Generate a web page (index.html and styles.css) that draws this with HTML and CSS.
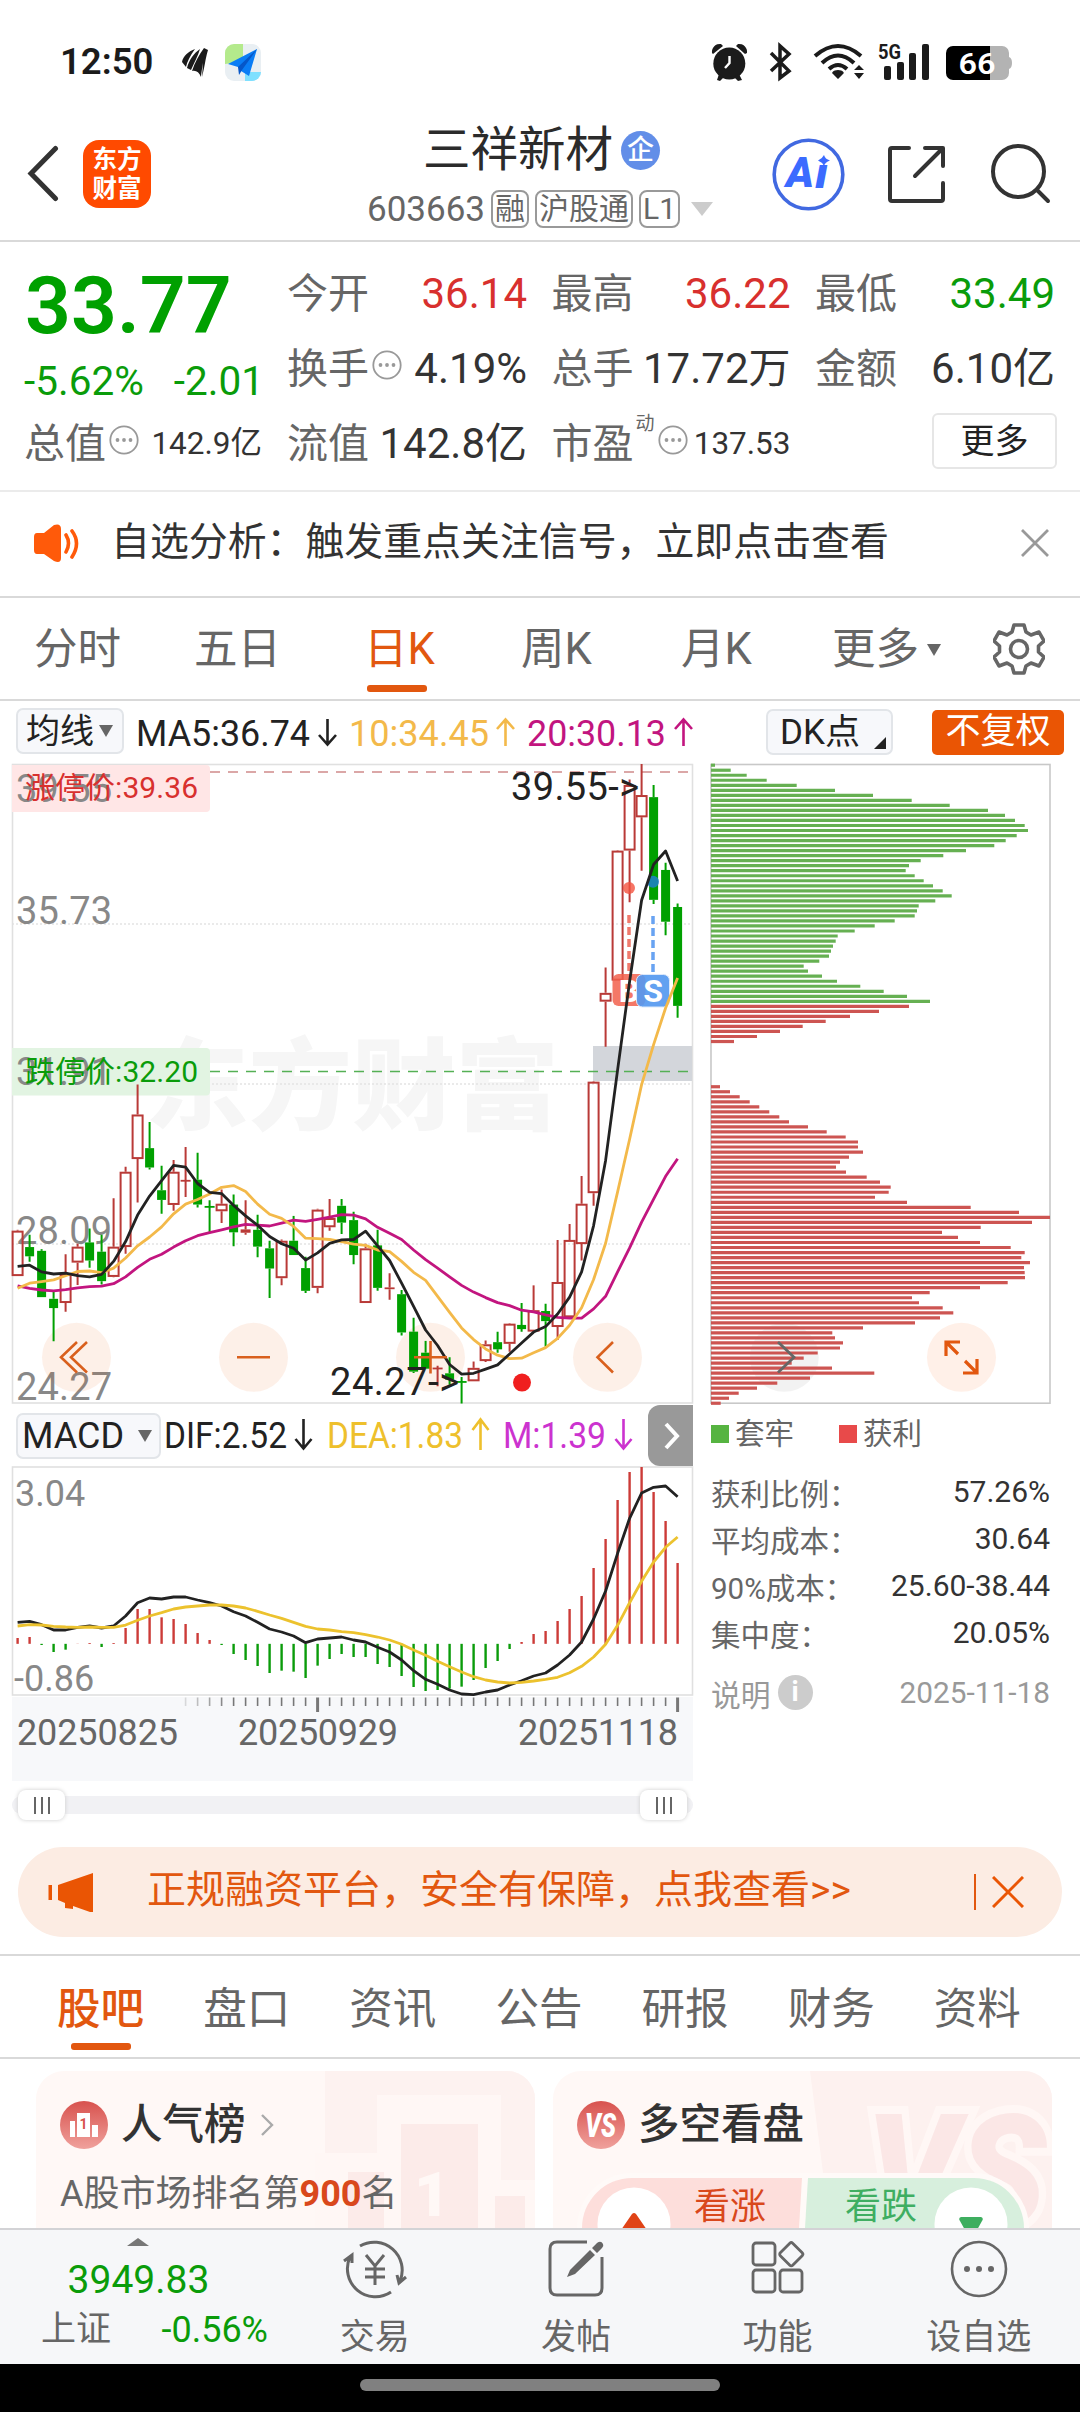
FILE: index.html
```html
<!DOCTYPE html>
<html lang="zh-CN">
<head>
<meta charset="utf-8">
<title>三祥新材 603663</title>
<link rel="stylesheet" href="styles.css">
</head>
<body>
<div class="screen">

<div class="status">
  <span class="clock">12:50</span>
  <svg class="status-left" viewBox="180 40 86 44">
    <path d="M182 62C183 56 189 51 195 49C190 56 187 62 186 67Z M187 68C189 60 194 53 200 49C198 56 194 63 191 70Z M192 71C195 62 199 55 204 48C205 56 202 66 201 77C199 72 196 70 192 71Z M204 48L208 50C205 60 205 66 202 77Z" fill="#1b1b1b"/>
    <rect x="225" y="44" width="36" height="37" rx="9" fill="#e9eff3"/>
    <path d="M234 44H243V62L225 64V53A9 9 0 0 1 234 44Z" fill="#b4ea8c"/>
    <path d="M245 72H261A9 9 0 0 1 252 81H245Z" fill="#7fe0ff"/>
    <path d="M257 49L228 64L238 67L241 71L249 76Z" fill="#0a7df5"/>
    <path d="M257 49L238 67L239 75L242 70Z" fill="#0556c8"/>
  </svg>
  <svg class="status-right" viewBox="706 38 312 48">
    <g fill="#1b1b1b">
      <circle cx="729.300" cy="63.500" r="16"/>
      <path d="M712 53A8 8 0 0 1 721 44L723 46L713 54Z M747 53A8 8 0 0 0 738 44L736 46L745 54Z"/>
      <path d="M719 74L724 77L720 81L717 80Z M739 74L734 77L738 81L742 80Z"/>
      <path d="M838 70C833 70 831 73 833 74L838 79L843 74C845 73 843 70 838 70Z"/>
      <path d="M859 65L864 70H854Z M859 79L854 73H864Z"/>
      <rect x="884" y="66" width="7" height="14" rx="2"/><rect x="897" y="62" width="7" height="18" rx="2"/>
      <rect x="909" y="53" width="7" height="27" rx="2"/><rect x="922" y="44" width="7" height="36" rx="2"/>
    </g>
    <path d="M729.500 56V63L725 68" fill="none" stroke="#fff" stroke-width="2.400"/>
    <g fill="none" stroke="#1b1b1b" stroke-width="4">
      <path d="M771 53L789 71L780 78V46L789 54L771 71" stroke-width="3.500"/>
      <path d="M815 56Q838 36 861 56M822 63Q838 48 854 63M829 69Q838 61 847 69"/>
    </g>
    <text x="878" y="58.500" class="net" textLength="23" lengthAdjust="spacingAndGlyphs">5G</text>
    <path d="M953 46H990V80H953A7 7 0 0 1 946 73V53A7 7 0 0 1 953 46Z" fill="#000"/>
    <path d="M990 46H1002A7 7 0 0 1 1009 53V57Q1012 58 1012 63T1009 69V73A7 7 0 0 1 1002 80H990Z" fill="#b3b3b3"/>
    <text x="958.500" y="74" class="battery" textLength="37" lengthAdjust="spacingAndGlyphs">66</text>
  </svg>
</div>

<header class="header">
  <svg class="back" viewBox="26 146 34 58"><path d="M55.500 149.500L31 174.500L55.500 199.500" fill="none" stroke="#333" stroke-width="5" stroke-linecap="round"/></svg>
  <div class="logo"><span>东方</span><span>财富</span></div>
  <div class="stock">
    <div class="name">三祥新材<span class="badge">企</span></div>
    <div class="code"><span>603663</span><i>融</i><i>沪股通</i><i>L1</i><b class="down"></b></div>
  </div>
  <svg class="actions" viewBox="770 134 284 80">
    <circle cx="808.500" cy="174.500" r="34.300" fill="none" stroke="#4169e1" stroke-width="3.600"/>
    <g class="ai"><text x="786" y="187" textLength="28" lengthAdjust="spacingAndGlyphs">A</text><text x="815" y="188" textLength="13" lengthAdjust="spacingAndGlyphs">ı</text><path d="M824 155Q825 159 830 160.500Q825 162 824 166Q822 162 818 160.500Q822 159 824 155Z"/></g>
    <g fill="none" stroke="#333" stroke-width="4" stroke-linecap="round" stroke-linejoin="round">
      <path d="M909 148H892Q890 148 890 150V199Q890 201 892 201H941Q943 201 943 199V183M925 148H943V166M942 149L915 176"/>
      <circle cx="1018.500" cy="171.500" r="25.500"/><path d="M1037 190L1048 201"/>
    </g>
  </svg>
</header>

<section class="quote">
  <div class="last">
    <div class="price">33.77</div>
    <div class="change"><span>-5.62%</span><span>-2.01</span></div>
    <div class="cell"><label>总值<svg class="more-dot" viewBox="0 0 30 30"><use href="#dots"/></svg></label><span class="sm">142.9亿</span></div>
  </div>
  <div class="stats">
    <div class="cell"><label>今开</label><span class="up">36.14</span></div>
    <div class="cell"><label>最高</label><span class="up">36.22</span></div>
    <div class="cell"><label>最低</label><span class="dn">33.49</span></div>
    <div class="cell"><label>换手<svg class="more-dot" viewBox="0 0 30 30"><use href="#dots"/></svg></label><span>4.19%</span></div>
    <div class="cell"><label>总手</label><span>17.72万</span></div>
    <div class="cell"><label>金额</label><span>6.10亿</span></div>
    <div class="cell"><label>流值</label><span>142.8亿</span></div>
    <div class="cell"><label>市盈<sup>动</sup><svg class="more-dot" viewBox="0 0 30 30"><use href="#dots"/></svg></label><span class="sm">137.53</span></div>
    <div class="cell end"><button class="more">更多</button></div>
  </div>
</section>

<section class="notice">
  <svg class="speaker" viewBox="32 524 48 40">
    <path d="M36 534H43L53 526Q60 524 60 530V559Q60 565 53 562L43 555H36Q33 555 33 551V538Q33 534 36 534Z" fill="#ff5a0a"/>
    <path d="M65 536Q70 544 65 553M71 532Q80 544 71 558" fill="none" stroke="#ff5a0a" stroke-width="3.600" stroke-linecap="round"/>
  </svg>
  <span class="notice-text">自选分析：触发重点关注信号，立即点击查看</span>
  <svg class="close" viewBox="0 0 30 30"><path d="M2 2L28 28M28 2L2 28" stroke="#999" stroke-width="2.800"/></svg>
</section>

<nav class="periods">
  <span>分时</span><span>五日</span><span class="on">日K</span><span>周K</span><span>月K</span><span>更多<b class="caret"></b></span>
  <svg class="gear" viewBox="-26 -26 52 52"><path d="M-5 -24H5L7 -17L12 -14L20 -17L25 -8L19.500 -3V3L25 8L20 17L12 14L7 17L5 24H-5L-7 17L-12 14L-20 17L-25 8L-19.500 3V-3L-25 -8L-20 -17L-12 -14L-7 -17Z" fill="none" stroke="#666" stroke-width="3.600" stroke-linejoin="round"/><circle r="8.500" fill="none" stroke="#666" stroke-width="3.600"/></svg>
</nav>

<div class="ma-bar">
  <span class="chip ma-chip">均线<b class="caret"></b></span>
  <svg class="ma-legend" viewBox="136 708 562 48">
    <text x="136" y="745.500" fill="#222" textLength="174" lengthAdjust="spacingAndGlyphs">MA5:36.74</text>
    <text x="349" y="745.500" fill="#f3b94a" textLength="140" lengthAdjust="spacingAndGlyphs">10:34.45</text>
    <text x="527" y="745.500" fill="#c2157f" textLength="139" lengthAdjust="spacingAndGlyphs">20:30.13</text>
    <g fill="none" stroke-width="2.600"><path stroke="#222" d="M327.500 719V744M319 735L327.500 744.500L336 735"/><path stroke="#f3b94a" d="M505.500 746V720M497 729L505.500 719.500L514 729"/><path stroke="#c2157f" d="M683.500 746V720M675 729L683.500 719.500L692 729"/></g>
  </svg>
  <span class="chip dk">DK点</span>
  <span class="adjust">不复权</span>
</div>

<main class="charts">
  <div class="left">
    <svg class="kline" viewBox="10 760 686 645">
      <text class="wm" x="145" y="1122" textLength="414" lengthAdjust="spacingAndGlyphs">东方财富</text>
      <g stroke="#e3e3e3" stroke-width="1.500" stroke-dasharray="2 2"><path d="M12 924H692M12 1084H692M12 1244H692"/></g>
      <rect x="12.500" y="764.500" width="680" height="638.500" fill="none" stroke="#e0e0e0" stroke-width="1.600"/>
      <rect x="593" y="1046" width="99" height="35" fill="#d3d6db"/>
      <path d="M210 772H692" stroke="#d08a8a" stroke-width="1.600" stroke-dasharray="10 8"/>
      <path d="M210 1071.500H692" stroke="#55b055" stroke-width="1.600" stroke-dasharray="10 8"/>
      <path d="M12 765H206Q210 765 210 769V808Q210 812 206 812H12Z" fill="#ffe6e6"/>
      <path d="M12 1048H206Q210 1048 210 1052V1091.500Q210 1095.500 206 1095.500H12Z" fill="#e2f4e2"/>
      <g class="axis"><text x="16" y="802" textLength="96">39.55</text><text x="16" y="924" textLength="96">35.73</text><text x="16" y="1084.500" textLength="96">31.91</text><text x="16" y="1244" textLength="96">28.09</text><text x="16" y="1400" textLength="96">24.27</text></g>
      <g class="limit"><text x="25" y="797.700" fill="#d8302e" textLength="173">涨停价:39.36</text><text x="25" y="1081.600" fill="#0a9c0a" textLength="173">跌停价:32.20</text></g>
      <g fill="#ea5504" fill-opacity=".09"><circle cx="76.500" cy="1357.300" r="34.500"/><circle cx="253.500" cy="1357.300" r="34.500"/><circle cx="430.500" cy="1357.300" r="34.500"/><circle cx="607.500" cy="1357.300" r="34.500"/></g>
      <g id="candles"></g>
      <g class="marks"><text x="511" y="799.700" textLength="128">39.55-&gt;</text><text x="330" y="1394.800" textLength="129">24.27-&gt;</text></g>
      <circle cx="629" cy="888" r="6" fill="#f4533f" fill-opacity=".8"/>
      <circle cx="653" cy="881.700" r="6" fill="#1f7fd0" fill-opacity=".85"/>
      <path d="M629 915V974" stroke="#ef7a6c" stroke-width="3.500" stroke-dasharray="8 4"/>
      <path d="M653 916V974" stroke="#68a3f2" stroke-width="3.500" stroke-dasharray="8 4"/>
      <rect x="612.500" y="974" width="33" height="32" rx="6" fill="#f2604c" fill-opacity=".85"/>
      <text class="bs" x="629" y="1002">B</text>
      <rect x="636.500" y="974.500" width="33" height="32.500" rx="6" fill="#5599f0" fill-opacity=".92" stroke="#dce9fb"/>
      <text class="bs" x="653" y="1002">S</text>
      <g id="averages" fill="none" stroke-width="2.800" stroke-linejoin="round"></g>
      <circle cx="522" cy="1382.600" r="9" fill="#f01f1f"/>
      <g fill="none" stroke="#d9601d" stroke-width="2.600"><path d="M77 1342L61 1357.300L77 1372.500M87 1342L71 1357.300L87 1372.500M237 1357.300H270M414 1357.300H447M430.500 1341V1373.500M613 1342L597.500 1357.300L613 1372.500"/></g>
    </svg>
    <div class="macd-bar">
      <span class="chip macd-chip">MACD<b class="caret"></b></span>
      <svg class="macd-legend" viewBox="164 1405 472 61">
        <text x="164" y="1448" fill="#222" textLength="123" lengthAdjust="spacingAndGlyphs">DIF:2.52</text>
        <text x="327" y="1448" fill="#eec02c" textLength="136" lengthAdjust="spacingAndGlyphs">DEA:1.83</text>
        <text x="503" y="1448" fill="#cc33cf" textLength="103" lengthAdjust="spacingAndGlyphs">M:1.39</text>
        <g fill="none" stroke-width="2.600"><path stroke="#222" d="M303.500 1419V1448M295.500 1439L303.500 1448.500L311.500 1439"/><path stroke="#eec02c" d="M480.500 1450V1420M472.500 1430L480.500 1419.500L488.500 1430"/><path stroke="#cc33cf" d="M623.500 1419V1448M615.500 1439L623.500 1448.500L631.500 1439"/></g>
      </svg>
      <span class="next"><svg viewBox="0 0 16 28"><path d="M2 2L13 14L2 26" fill="none" stroke="#fff" stroke-width="4"/></svg></span>
    </div>
    <svg class="macd" viewBox="10 1466 686 231">
      <rect x="12.500" y="1467" width="680" height="228" fill="none" stroke="#e0e0e0" stroke-width="1.600"/>
      <g id="bars"></g>
      <g id="signals" fill="none" stroke-width="2.800" stroke-linejoin="round"></g>
      <g class="axis small"><text x="15" y="1505.700">3.04</text><text x="14" y="1690.700">-0.86</text></g>
    </svg>
    <svg class="dates" viewBox="12 1697 681 84">
      <g id="ticks"></g>
      <g class="date"><text x="17" y="1745" textLength="161">20250825</text><text x="238" y="1745" textLength="160">20250929</text><text x="518" y="1745" textLength="160">20251118</text></g>
    </svg>
    <div class="slider"><span><i></i><i></i><i></i></span><span><i></i><i></i><i></i></span></div>
  </div>

  <div class="right">
    <svg class="chips" viewBox="708 760 346 645">
      <rect x="711" y="764.500" width="339" height="638.700" fill="none" stroke="#c8c8c8" stroke-width="1.600"/>
      <circle cx="784.300" cy="1357.300" r="34.500" fill="#000" fill-opacity=".05"/>
      <g id="distribution"></g>
      <path d="M778 1342L794 1357.300L778 1372.500" fill="none" stroke="#666" stroke-width="2.800"/>
      <circle cx="961.500" cy="1357.300" r="34.500" fill="#fff0e8"/>
      <path d="M946 1356V1342H960M946 1342L958 1354M977 1359V1373H963M977 1373L965 1361" fill="none" stroke="#e2570f" stroke-width="3.200"/>
    </svg>
    <div class="legend"><span><i class="g"></i>套牢</span><span><i class="r"></i>获利</span></div>
    <dl class="cost">
      <div><dt>获利比例：</dt><dd>57.26%</dd></div>
      <div><dt>平均成本：</dt><dd>30.64</dd></div>
      <div><dt>90%成本：</dt><dd>25.60-38.44</dd></div>
      <div><dt>集中度：</dt><dd>20.05%</dd></div>
    </dl>
    <div class="explain"><span>说明<b>i</b></span><span>2025-11-18</span></div>
  </div>
</main>

<aside class="banner">
  <svg class="horn" viewBox="48 1871 46 41"><path d="M93 1872V1911H90L73 1905V1908L65 1907V1902L58 1899V1884ZM48.500 1884H52V1899H48.500Z" fill="#ea5504"/></svg>
  <span class="banner-text">正规融资平台，安全有保障，点我查看&gt;&gt;</span>
  <i class="rule"></i>
  <svg class="banner-close" viewBox="0 0 32 32"><path d="M1 1L31 31M31 1L1 31" stroke="#ea5504" stroke-width="3"/></svg>
</aside>

<nav class="sections">
  <span class="on">股吧</span><span>盘口</span><span>资讯</span><span>公告</span><span>研报</span><span>财务</span><span>资料</span>
</nav>

<section class="cards">
  <article class="card">
    <svg class="card-bg" viewBox="36 2071 499 157">
      <path d="M325 2071H535V2228H325Z" fill="#fdf2f0"/>
      <path d="M315 2228V2153H377V2095H501V2180H535V2228Z" fill="#fff7f5"/>
      <path d="M348 2228V2172H384V2228ZM401 2228V2124H478V2228ZM495 2228V2196H525V2228Z" fill="#fcebe9"/>
      <text x="414" y="2216" class="podium">1</text>
    </svg>
    <div class="card-head">
      <svg class="disc" viewBox="-24 -24 48 48"><defs><linearGradient id="rd" x2="0" y2="1"><stop stop-color="#d8524e"/><stop offset="1" stop-color="#f0a19c"/></linearGradient></defs><circle r="24" fill="url(#rd)"/><path d="M-7 -12H6V12H-7ZM-14 -4H-9V12H-14ZM8 0H14V12H8Z" fill="#fff"/><text x="-4.500" y="4" class="one">1</text></svg>
      <h3>人气榜</h3>
      <svg class="chev" viewBox="0 0 14 24"><path d="M2 2L12 12L2 22" fill="none" stroke="#aaa" stroke-width="2.400"/></svg>
    </div>
    <p class="rank">A股市场排名第<b>900</b>名</p>
  </article>
  <article class="card">
    <svg class="card-bg" viewBox="553 2071 499 157">
      <path d="M810 2071H1052V2228H830Z" fill="#fdf1ef"/>
      <text x="866" y="2226" class="vs-wm" textLength="180" lengthAdjust="spacingAndGlyphs">VS</text>
    </svg>
    <div class="card-head">
      <svg class="disc" viewBox="-24 -24 48 48"><circle r="24" fill="url(#rd)"/><text x="-16" y="12" class="vs" textLength="31" lengthAdjust="spacingAndGlyphs">VS</text></svg>
      <h3>多空看盘</h3>
    </div>
    <svg class="vote" viewBox="577 2172 452 56">
      <path d="M577 2228A55 55 0 0 1 632 2173H974A55 55 0 0 1 1029 2228Z" fill="#fffaf8"/>
      <path d="M582 2228A50 50 0 0 1 632 2178H802L799 2228Z" fill="#fddedb"/>
      <path d="M808 2178H974A50 50 0 0 1 1024 2228H805Z" fill="#d7efdd"/>
      <circle cx="634" cy="2224" r="36.500" fill="#fff"/><circle cx="971" cy="2224" r="36.500" fill="#fff"/>
      <path d="M632 2214Q634 2212 636 2214L647 2230H621Z" fill="#e04316"/>
      <path d="M961 2217H981Q984 2218 982 2221L977 2230H965L960 2221Q958 2218 961 2217Z" fill="#3eae5f"/>
      <text x="694" y="2218.500" fill="#d9481c">看涨</text><text x="845" y="2218.500" fill="#3fae62">看跌</text>
    </svg>
  </article>
</section>

<footer class="bottom">
  <div class="index">
    <b class="up-caret"></b>
    <div class="idx-val">3949.83</div>
    <div class="idx-row"><span>上证</span><em>-0.56%</em></div>
  </div>
  <div class="item"><svg viewBox="-34 -30 68 60"><g fill="none" stroke="#666" stroke-width="3"><path d="M-15 -23A28 28 0 0 1 25 12M16 23A28 28 0 0 1 -25 -12M-31 -8L-23 -14L-23 -6M31 8L24 14L22 6"/><path d="M-9 -14L0 -3L9 -14M0 -3V16M-10 0H10M-10 8H10"/></g></svg>交易</div>
  <div class="item"><svg viewBox="-34 -30 68 60"><path d="M11 -27H-19Q-26 -27 -26 -20V19Q-26 26 -19 26H19Q26 26 26 19V-12" fill="none" stroke="#666" stroke-width="3"/><path d="M-9 8L-6 1L14 -19L19 -14L-1 5ZM16 -21L21 -26Q25 -29 27 -25Q28 -23 26 -21L21 -16Z" fill="#666"/></svg>发帖</div>
  <div class="item"><svg viewBox="-34 -30 68 60"><g fill="none" stroke="#666" stroke-width="2.800"><rect x="-24" y="-26" width="22" height="22" rx="3"/><rect x="-24" y="1" width="22" height="22" rx="3"/><rect x="3" y="1" width="22" height="22" rx="3"/><rect x="5.500" y="-23.500" width="17.500" height="17.500" rx="2" transform="rotate(45 14.250 -14.750)"/></g></svg>功能</div>
  <div class="item"><svg viewBox="-34 -30 68 60"><circle r="27" fill="none" stroke="#666" stroke-width="2.600"/><g fill="#666"><circle cx="-12" r="3"/><circle r="3"/><circle cx="12" r="3"/></g></svg>设自选</div>
</footer>
<div class="home"><i></i></div>
</div>

<svg width="0" height="0" class="defs"><symbol id="dots" viewBox="0 0 30 30"><circle cx="15" cy="15" r="13.700" fill="none" stroke="#999" stroke-width="1.800"/><g fill="#999"><circle cx="8.500" cy="15" r="1.900"/><circle cx="15" cy="15" r="1.900"/><circle cx="21.500" cy="15" r="1.900"/></g></symbol></svg>
<script src="charts.js"></script>
</body>
</html>
```
FILE: styles.css
```css
* { box-sizing: border-box; }
body { margin: 0; font-family: Roboto, "Noto Sans CJK SC", sans-serif; color: #333; background: #fff; }
i, em { font-style: normal; }
svg { display: block; flex: none; }
.defs { position: absolute; }
.screen { width: 1080px; height: 2412px; overflow: hidden; display: flex; flex-direction: column; }
.screen > * { flex: none; }

.status { height: 112px; display: flex; align-items: flex-start; padding: 38px 62px 0 60px; }
.clock { font-size: 36.5px; font-weight: 600; line-height: 48px; width: 120px; color: #1b1b1b; }
.status-left { width: 86px; height: 44px; margin-top: 2px; }
.status-right { width: 312px; height: 48px; margin-left: auto; }
.net { font-size: 20px; font-weight: 700; fill: #1b1b1b; }
.battery { font-size: 30px; font-weight: 600; fill: #fff; }

.header { height: 130px; border-bottom: 2px solid #d9d9d9; display: flex; padding: 8px 26px 0; }
.back { width: 34px; height: 58px; margin-top: 25px; }
.logo { width: 68px; height: 68px; border-radius: 16px; background: #ff4a00; color: #fff; margin: 20px 0 0 23px; display: flex; flex-direction: column; align-items: center; justify-content: center; font-size: 24.5px; line-height: 29px; font-weight: 600; }
.stock { flex: 1; display: flex; flex-direction: column; padding-left: 272px; }
.name { display: flex; align-items: center; font-size: 47.5px; line-height: 60px; height: 60px; color: #2b2b2b; white-space: nowrap; }
.badge { width: 39px; height: 39px; border-radius: 50%; background: #628ee8; color: #fff; font-size: 27px; line-height: 39px; text-align: center; margin-left: 8px; font-weight: 500; }
.code { display: flex; align-items: center; height: 38px; margin: 10px 0 0 -56px; font-size: 35px; color: #666; white-space: nowrap; }
.code span { width: 124px; }
.code i { border: 2px solid #999; border-radius: 8px; height: 38px; line-height: 33px; font-size: 30px; padding: 0 2px; margin-right: 6px; text-align: center; }
.down { border: 11px solid transparent; border-top: 14px solid #ccc; border-bottom: 0; margin-left: 5px; }
.actions { width: 284px; height: 80px; margin-top: 14px; }
.ai { font-size: 42px; font-weight: 900; font-style: italic; fill: #3b6bff; }

.quote { height: 250px; display: flex; gap: 27px; padding: 14px 25px 0 26px; border-bottom: 2px solid #ebebeb; }
.last { width: 236px; }
.price { height: 99px; line-height: 100px; font-size: 80.5px; font-weight: 600; color: #00a000; margin-left: -1px; white-space: nowrap; }
.change { height: 52px; line-height: 52px; font-size: 40.5px; color: #0a9c0a; display: flex; justify-content: space-between; margin: 0 -2px 0 -2px; }
.stats { display: grid; grid-template-columns: 238px 237px 238px; column-gap: 26.5px; grid-auto-rows: 75px; }
.cell { height: 75px; display: flex; justify-content: space-between; align-items: center; font-size: 42px; line-height: 50px; white-space: nowrap; }
.last .cell { height: 73px; }
.cell label { color: #666; font-size: 41px; display: flex; align-items: center; margin-left: -2px; }
.cell .sm { font-size: 31.5px; }
.cell sup { font-size: 19px; line-height: 20px; align-self: flex-start; margin: -5px 0 0 2px; }
.up { color: #d8302e; }
.dn { color: #0a9c0a; }
.more-dot { width: 30px; height: 30px; margin: -8px 0 0 3px; }
.end { justify-content: flex-end; }
.more { font: 34px/50px Roboto, "Noto Sans CJK SC", sans-serif; width: 125px; height: 56px; margin: -6px -2px 0 0; padding: 0; border: 2px solid #e6e6e6; border-radius: 6px; background: #fff; color: #222; }

.notice { height: 106px; display: flex; align-items: center; padding: 0 30px 3px 33px; border-bottom: 2px solid #d9d9d9; }
.speaker { width: 48px; height: 40px; }
.notice-text { font-size: 38.9px; line-height: 50px; margin: -2px 0 0 30px; flex: 1; white-space: nowrap; }
.close { width: 30px; height: 30px; }

.periods { height: 103px; display: flex; border-bottom: 2px solid #d9d9d9; font-size: 43.5px; line-height: 104px; color: #666; white-space: nowrap; padding-left: 34px; }
.periods span { width: 160px; height: 104px; display: flex; align-items: center; }
.periods span:nth-child(3) { width: 167px; padding-left: 10px; }
.periods span:nth-child(6) { width: 157px; margin-left: -9px; }
.periods .on, .sections .on { color: #e2570f; position: relative; }
.periods .on::after { content: ""; position: absolute; left: 13px; bottom: 10px; width: 60px; height: 7px; border-radius: 3px; background: #e2570f; }
.caret { border: 7px solid transparent; border-top: 12px solid #666; border-bottom: 0; margin-left: 8px; }
.gear { width: 52px; height: 52px; margin: 25px 0 0 4px; }

.ma-bar { height: 59px; display: flex; padding: 7px 16px 0; align-items: flex-start; white-space: nowrap; }
.chip { border: 2px solid #e2e5e9; background: #f7f8fb; border-radius: 7px; height: 46px; line-height: 41px; display: flex; align-items: center; color: #222; }
.ma-chip { width: 108px; font-size: 34px; padding-left: 8px; }
.ma-chip .caret { margin-left: 5px; }
.ma-legend { width: 562px; height: 48px; margin-left: 12px; font-size: 36px; }
.dk { width: 127px; margin: 1px 0 0 68px; font-size: 35px; padding-left: 12px; position: relative; }
.dk::after { content: ""; position: absolute; right: 5px; bottom: 4px; border-left: 12px solid transparent; border-bottom: 12px solid #222; }
.adjust { margin: 2px 0 0 39px; width: 132px; height: 45px; line-height: 44px; border-radius: 5px; background: #ea5504; color: #fff; font-size: 35px; text-align: center; }

.charts { height: 1073px; display: flex; padding-left: 10px; }
.left { width: 686px; }
.kline { width: 686px; height: 645px; }
.wm { font-size: 100px; font-weight: 900; fill: #f6f6f6; }
.axis { font-size: 38px; fill: #888; }
.axis.small { font-size: 36px; }
.limit { font-size: 30px; }
.marks { font-size: 38px; fill: #222; }
.bs { font-size: 32px; font-weight: 700; fill: #fff; text-anchor: middle; }
.macd-bar { height: 61px; display: flex; padding-left: 6px; }
.macd-chip { width: 145px; margin-top: 8px; font-size: 36px; padding-left: 4px; justify-content: space-between; padding-right: 7px; }
.macd-legend { width: 472px; height: 61px; margin-left: 3px; font-size: 37.5px; }
.next { width: 45px; height: 61px; margin-left: 12px; background: #999; border-radius: 12px 0 0 12px; display: flex; align-items: center; justify-content: center; padding-left: 3px; }
.next svg { width: 16px; height: 28px; }
.macd { width: 686px; height: 231px; }
.dates { width: 681px; height: 84px; margin-left: 2px; background: #f7f8fa; }
.date { font-size: 36px; fill: #666; }
.slider { width: 681px; height: 18px; margin: 15px 0 0 2px; background: #f1f1f4; border-radius: 9px; display: flex; justify-content: space-between; align-items: center; padding: 0 6px; }
.slider span { width: 47px; height: 30px; border-radius: 8px; background: #fff; box-shadow: 0 0 4px #ccc; display: flex; justify-content: center; align-items: center; gap: 5px; }
.slider i { width: 2px; height: 17px; background: #666; }

.right { width: 346px; margin-left: 12px; color: #666; font-size: 29.5px; }
.chips { width: 346px; height: 645px; }
.legend { display: flex; height: 58px; align-items: center; padding-left: 3px; gap: 45px; line-height: 40px; }
.legend span { display: flex; align-items: center; }
.legend i { width: 18px; height: 18px; margin-right: 6px; }
.legend .g { background: #56b441; }
.legend .r { background: #e84a4a; }
.cost { margin: 5px 4px 0 3px; }
.cost div { height: 47px; display: flex; justify-content: space-between; align-items: center; }
.cost dd { margin: 0; color: #333; font-size: 30px; }
.explain { display: flex; justify-content: space-between; align-items: center; margin: 13px 4px 0 3px; height: 47px; color: #999; font-size: 29.8px; }
.explain span { display: flex; align-items: center; }
.explain b { width: 35px; height: 35px; border-radius: 50%; background: #ccc; color: #fff; margin-left: 7px; text-align: center; font-size: 27px; line-height: 35px; }

.banner { margin: 14px 18px 0; height: 90px; border-radius: 45px; background: #fcece3; display: flex; align-items: center; padding: 0 38px 0 30px; color: #e2570f; }
.horn { width: 46px; height: 41px; }
.banner-text { font-size: 39px; line-height: 50px; margin: -4px 0 0 53px; flex: 1; white-space: nowrap; }
.rule { width: 2px; height: 36px; background: #e2570f; }
.banner-close { width: 32px; height: 32px; margin-left: 16px; }

.sections { margin-top: 17px; height: 105px; border: solid #d9d9d9; border-width: 2px 0; display: flex; padding-left: 57px; font-size: 43.5px; line-height: 108px; color: #666; }
.sections span { width: 146.5px; height: 101px; }
.sections .on { font-weight: 500; }
.sections .on::after { content: ""; position: absolute; left: 14px; bottom: 7px; width: 60px; height: 7px; border-radius: 3px; background: #e2570f; }

.cards { height: 169px; padding: 12px 28px 0 36px; display: flex; gap: 18px; overflow: hidden; }
.card { width: 499px; height: 220px; border-radius: 28px; background: #fff8f6; position: relative; overflow: hidden; padding: 30px 0 0 24px; }
.card > * { position: relative; }
.card .card-bg { position: absolute; left: 0; top: 0; width: 499px; height: 157px; }
.podium { font-size: 62px; font-weight: 900; fill: #fff8f6; }
.vs-wm { font-size: 158px; font-weight: 900; font-style: italic; fill: #fbe7e6; stroke: #fff7f5; stroke-width: 16px; paint-order: stroke; }
.card-head { display: flex; align-items: center; height: 48px; }
.disc { width: 48px; height: 48px; }
.one { font-size: 14px; font-weight: 700; fill: #d8524e; }
.vs { font-size: 33px; font-weight: 900; font-style: italic; fill: #fff; }
.card h3 { margin: 0 0 0 13px; font-size: 41.5px; line-height: 48px; font-weight: 500; color: #333; }
.chev { width: 14px; height: 24px; margin-left: 14px; }
.rank { margin: 22px 0 0; font-size: 36px; line-height: 46px; color: #666; white-space: nowrap; }
.rank b { color: #d9481c; }
.vote { width: 452px; height: 56px; font-size: 36px; margin-top: 23px; }

.bottom { height: 136px; border-top: 2px solid #d3d3d6; background: #f6f7f9; display: flex; color: #666; font-size: 35px; }
.index { width: 274px; padding: 8px 0 0 41px; }
.up-caret { display: block; width: 0; border: 11px solid transparent; border-bottom: 8px solid #777; border-top: 0; margin-left: 86px; }
.idx-val { width: 195px; text-align: center; font-size: 39px; line-height: 46px; color: #0a9c0a; margin-top: 11px; }
.idx-row { display: flex; justify-content: space-between; align-items: center; width: 227px; line-height: 50px; margin-top: 2px; }
.idx-row em { color: #0a9c0a; font-size: 36px; }
.item { width: 201.4px; display: flex; flex-direction: column; align-items: center; line-height: 50px; white-space: nowrap; }
.item svg { width: 68px; height: 60px; margin: 9px 0 14px; }
.home { height: 49px; background: #000; display: flex; justify-content: center; padding-top: 15px; }
.home i { width: 360px; height: 12px; border-radius: 6px; background: #808080; }
```
FILE: charts.js
```js
// Daily candles: direction, high, body top, body bottom, low (plot units below y = 750).
const candles = `r1140,1142,1250,1250 g1152,1181,1203,1216 g1186,1190,1300,1300 g1287,1304,1326,1405 r1198,1245,1314,1335
r1173,1180,1218,1271 g1137,1170,1213,1230 g1152,1192,1262,1270 r1065,1180,1252,1253 r990,1002,1181,1197 r795,866,972,1075
g884,946,992,997 g988,1046,1069,1102 r974,1002,1081,1095 r943,1023,1024,1062 g957,1021,1080,1087 g1070,1085,1086,1145
r1044,1078,1096,1124 g1056,1080,1146,1179 r1070,1139,1147,1152 g1104,1140,1180,1205 g1166,1184,1232,1302 r1163,1166,1255,1272
g1107,1166,1200,1200 g1204,1231,1285,1290 r1090,1092,1278,1291 r1067,1112,1134,1142 g1067,1083,1123,1150 g1097,1117,1200,1222
r1173,1184,1314,1314 g1140,1177,1278,1285 r1243,1277,1281,1306 g1283,1293,1384,1391 g1349,1382,1477,1480 g1404,1432,1470,1470
r1463,1469,1470,1512 g1443,1481,1496,1508 g1490,1501,1502,1553 r1453,1468,1500,1500 r1403,1412,1452,1454 g1382,1407,1424,1432
r1362,1363,1411,1430 g1314,1366,1376,1382 r1272,1331,1382,1382 g1316,1333,1357,1418 r1164,1264,1371,1402 r1126,1164,1348,1350
r1012,1078,1174,1213 r787,788,1053,1083 r517,577,598,705 r238,239,548,548 r70,83,239,362 r33,107,160,287 g83,112,356,366
g268,285,408,440 g365,373,608,636`.split(/\s+/);
const ma5 = [1227,1224,1240,1245,1243,1249,1252,1246,1215,1168,1105,1060,1023,987,991,1030,1051,1054,1082,1107,1129,1156,1173,1184,1212,1195,1172,1164,1163,1143,1178,1213,1267,1322,1378,1415,1460,1483,1481,1471,1461,1435,1409,1383,1370,1340,1300,1240,1130,975,760,550,357,272,240,311];
const ma10 = [1279,1267,1263,1259,1249,1239,1238,1242,1231,1207,1178,1157,1133,1102,1079,1068,1055,1039,1035,1049,1079,1103,1113,1132,1160,1161,1163,1168,1174,1177,1188,1192,1215,1241,1260,1298,1336,1373,1401,1423,1438,1446,1445,1432,1420,1398,1367,1325,1258,1172,1050,925,795,700,613,542];
const ma20 = [1273,1279,1283,1285,1282,1278,1275,1274,1268,1252,1229,1210,1198,1181,1166,1154,1147,1140,1133,1127,1129,1131,1124,1117,1120,1115,1110,1104,1105,1114,1134,1148,1163,1188,1211,1231,1252,1272,1288,1301,1313,1320,1331,1335,1342,1348,1350,1350,1328,1298,1240,1183,1122,1067,1013,971];

const X = i => 17.6 + 12 * i;
const K = v => 750 + v / 2.376;
const put = (id, html) => { document.getElementById(id).innerHTML = html; };
const line = (data, y, color) =>
  `<polyline stroke="${color}" points="${data.map((v, i) => X(i).toFixed(1) + ',' + y(v).toFixed(1)).join(' ')}"/>`;

put('candles', candles.map((c, i) => {
  const [h, t, b, l] = c.slice(1).split(',').map(Number).map(K);
  const x = X(i), up = c[0] === 'r', color = up ? '#b93a37' : '#00a000';
  const wick = `<path d="M${x} ${h}V${t}M${x} ${b}V${l}" stroke="${color}" stroke-width="2"/>`;
  const height = b - t;
  if (height < 4) {
    return wick + `<path d="M${x - 5} ${(t + b) / 2}h10" stroke="${color}" stroke-width="${Math.max(1.8, height)}"/>`;
  }
  return wick + (up
    ? `<rect x="${x - 5}" y="${t + 1}" width="10" height="${height - 2}" fill="none" stroke="${color}" stroke-width="2"/>`
    : `<rect x="${x - 4.5}" y="${t}" width="9" height="${height}" fill="${color}"/>`);
}).join(''));
put('averages', line(ma20, K, '#c2157f') + line(ma10, K, '#f3b94a') + line(ma5, K, '#222'));

// MACD histogram and its two lines.
const hist = [714,711,735,756,749,731,729,741,729,684,627,627,652,657,672,699,720,735,762,780,798,819,812,815,834,797,777,762,771,771,792,801,828,861,873,870,866,860,840,804,783,747,726,702,693,663,627,588,504,417,300,216,201,276,363,489];
const dif = [667,664,674,690,690,682,678,684,678,648,608,594,597,591,591,600,608,618,635,648,667,687,696,708,728,717,714,711,720,726,742,756,780,812,838,853,870,882,884,876,870,855,842,828,819,795,765,726,657,573,460,355,279,262,258,290];
const dea = [678,674,675,679,681,682,681,682,682,675,661,648,638,627,621,618,615,615,618,624,634,645,655,667,679,687,690,695,698,704,711,720,733,750,766,784,800,816,830,840,846,849,847,843,838,832,818,799,771,733,676,608,544,486,442,411];
const M = v => 1400 + v / 3;
put('bars', hist.map((v, i) =>
  `<path d="M${X(i)} ${M(731.5)}V${M(v)}" stroke="${v > 731 ? '#0a9c0a' : '#cc3b38'}" stroke-width="2.4"/>`).join(''));
put('signals', line(dif, M, '#222') + line(dea, M, '#ecc22e'));

put('ticks', Array.from({ length: 42 }, (_, n) => {
  const i = n + 14, major = i === 25 || i === 55;
  return `<path d="M${X(i)} 1697.5V${major ? 1712 : 1706}" stroke="#777" stroke-opacity="${Math.min(1, 0.25 + n * 0.2)}" stroke-width="${major ? 3 : 1.6}"/>`;
}).join(''));

// Cost distribution: bar lengths from the top price level downwards.
const chips = [45,92,140,200,290,405,519,635,749,864,915,945,974,984,950,917,883,798,730,662,627,617,644,671,699,728,755,706,656,651,644,584,524,464,413,407,399,393,387,358,311,324,366,411,481,551,621,690,
627,537,450,377,308,240,171,102,0,0,0,0,0,0,0,0,
60,90,119,149,178,208,238,267,324,380,437,474,474,489,447,420,408,438,500,540,572,566,525,621,812,957,1050,996,842,726,774,840,932,974,964,990,972,974,975,923,840,689,636,657,728,760,720,645,489,397,405,429,420,353,311,275,396,523,330,232,171,116,87,62];
put('distribution', chips.map((v, i) => v
  ? `<path d="M711 ${(765.2 + i * 5.024).toFixed(2)}H${(700 + v / 3).toFixed(1)}" stroke="${i < 48 ? '#66b052' : '#cd5552'}" stroke-width="3.2"/>`
  : '').join(''));
```
